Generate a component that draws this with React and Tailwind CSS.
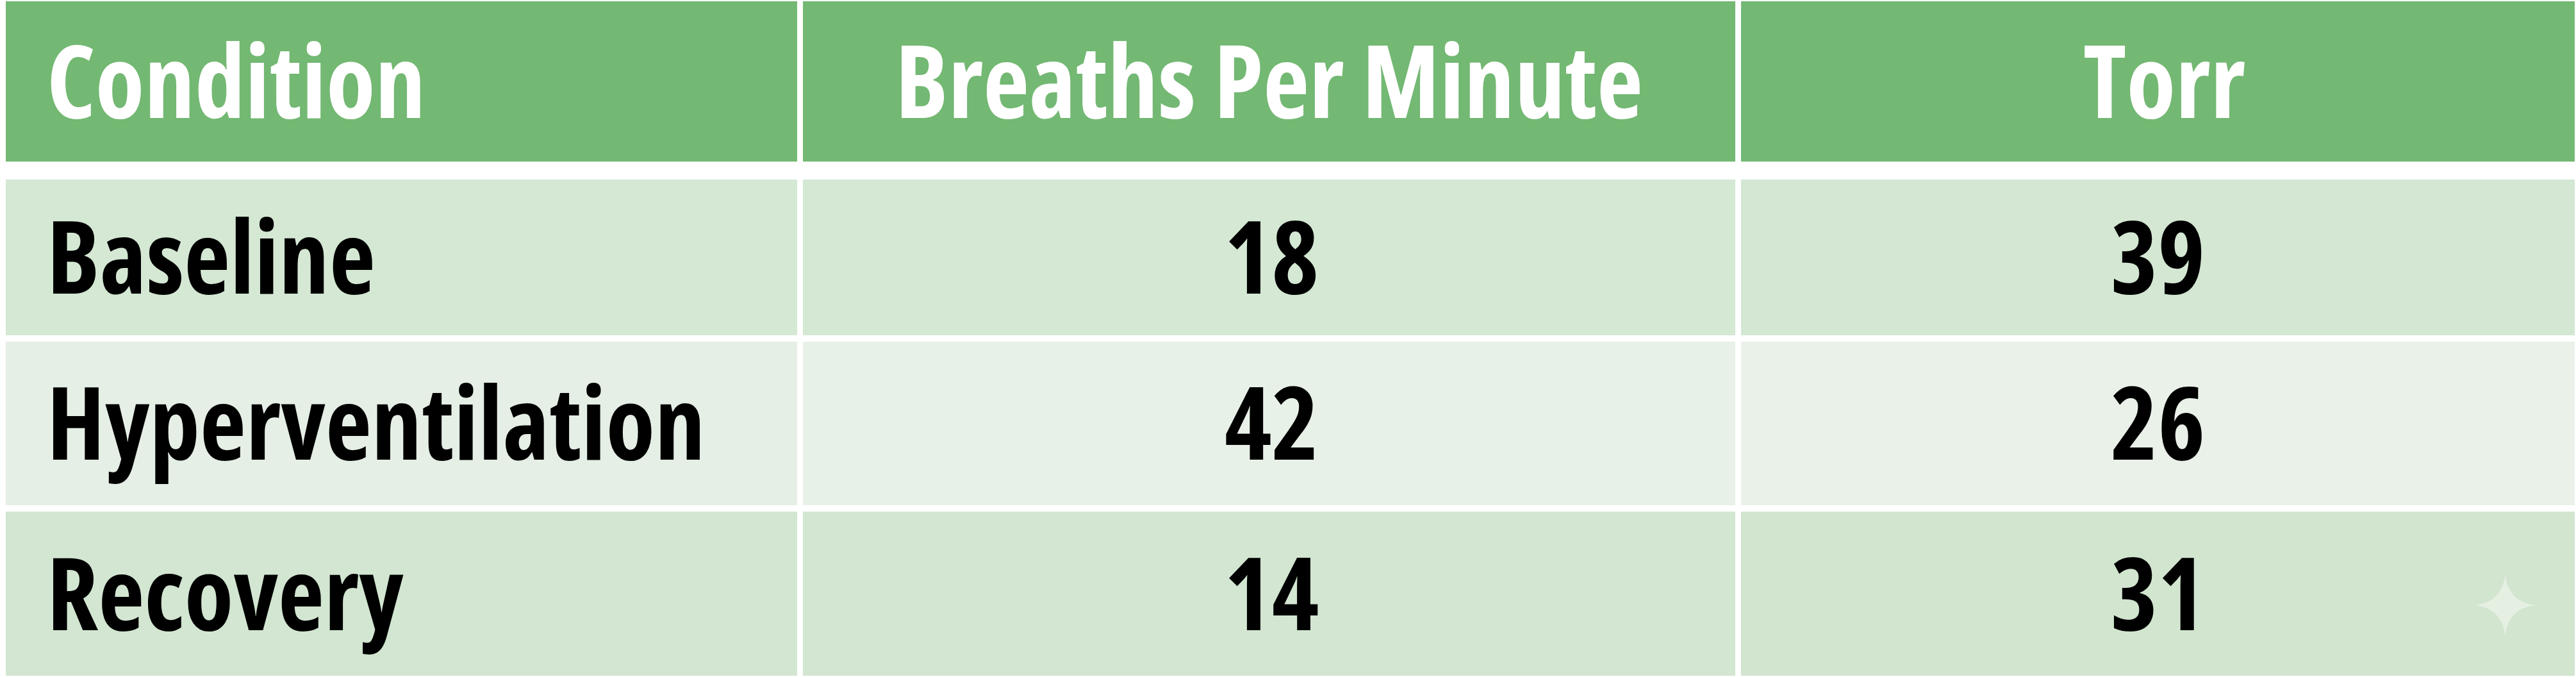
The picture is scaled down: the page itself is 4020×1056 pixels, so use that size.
const rows = [
  { name: "Baseline", bpm: "18", torr: "39", h: "h-[243px]", bg: ["bg-[#d4e8d4]", "bg-[#d4e8d4]", "bg-[#d3e7d2]"] },
  { name: "Hyperventilation", bpm: "42", torr: "26", h: "h-[255px]", bg: ["bg-[#e5efe5]", "bg-[#e8f1e8]", "bg-[#e9f1e9]"] },
  { name: "Recovery", bpm: "14", torr: "31", h: "h-[256px]", bg: ["bg-[#d2e6d1]", "bg-[#d2e6d1]", "bg-[#d1e5cf]"] },
];

function Sparkle() {
  return (
    <svg viewBox="0 0 100 100" className="absolute right-[60px] bottom-[62px] h-[96px] w-[97px]">
      <path
        d="M50 0 C54 30 68 46 100 50 C68 54 54 70 50 100 C46 70 32 54 0 50 C32 46 46 30 50 0 Z"
        fill="#e5f0e3"
      />
    </svg>
  );
}

export default function App() {
  return (
    <div className="flex h-[1056px] w-[4020px] flex-col bg-white pt-[2px] pr-[3px] pb-[2px] pl-[9px] font-['Open_Sans',sans-serif] font-bold font-stretch-condensed leading-none">
      <div className="grid h-[250px] grid-cols-[1235px_1455px_1301px] gap-x-[9px] text-[157px] text-white">
        <div className="flex items-center bg-[#73b873] pb-[8px] pl-[64px]">Condition</div>
        <div className="flex items-center justify-center bg-[#73b873] pb-[8px]">Breaths Per Minute</div>
        <div className="flex items-center justify-center bg-[#73b873] pb-[8px] pl-[20px]">Torr</div>
      </div>
      <div className="mt-[28px] flex flex-col gap-[10px] text-[157px] text-black">
        {rows.map((r, i) => (
          <div key={r.name} className={`grid ${r.h} grid-cols-[1235px_1455px_1301px] gap-x-[9px]`}>
            <div className={`flex items-center ${r.bg[0]} pb-[8px] pl-[64px]`}>{r.name}</div>
            <div className={`flex items-center justify-center ${r.bg[1]} pb-[8px] pl-[8px]`}>{r.bpm}</div>
            <div className={`relative flex items-center justify-center ${r.bg[2]} pb-[8px]`}>
              {r.torr}
              {i === 2 && <Sparkle />}
            </div>
          </div>
        ))}
      </div>
    </div>
  );
}
